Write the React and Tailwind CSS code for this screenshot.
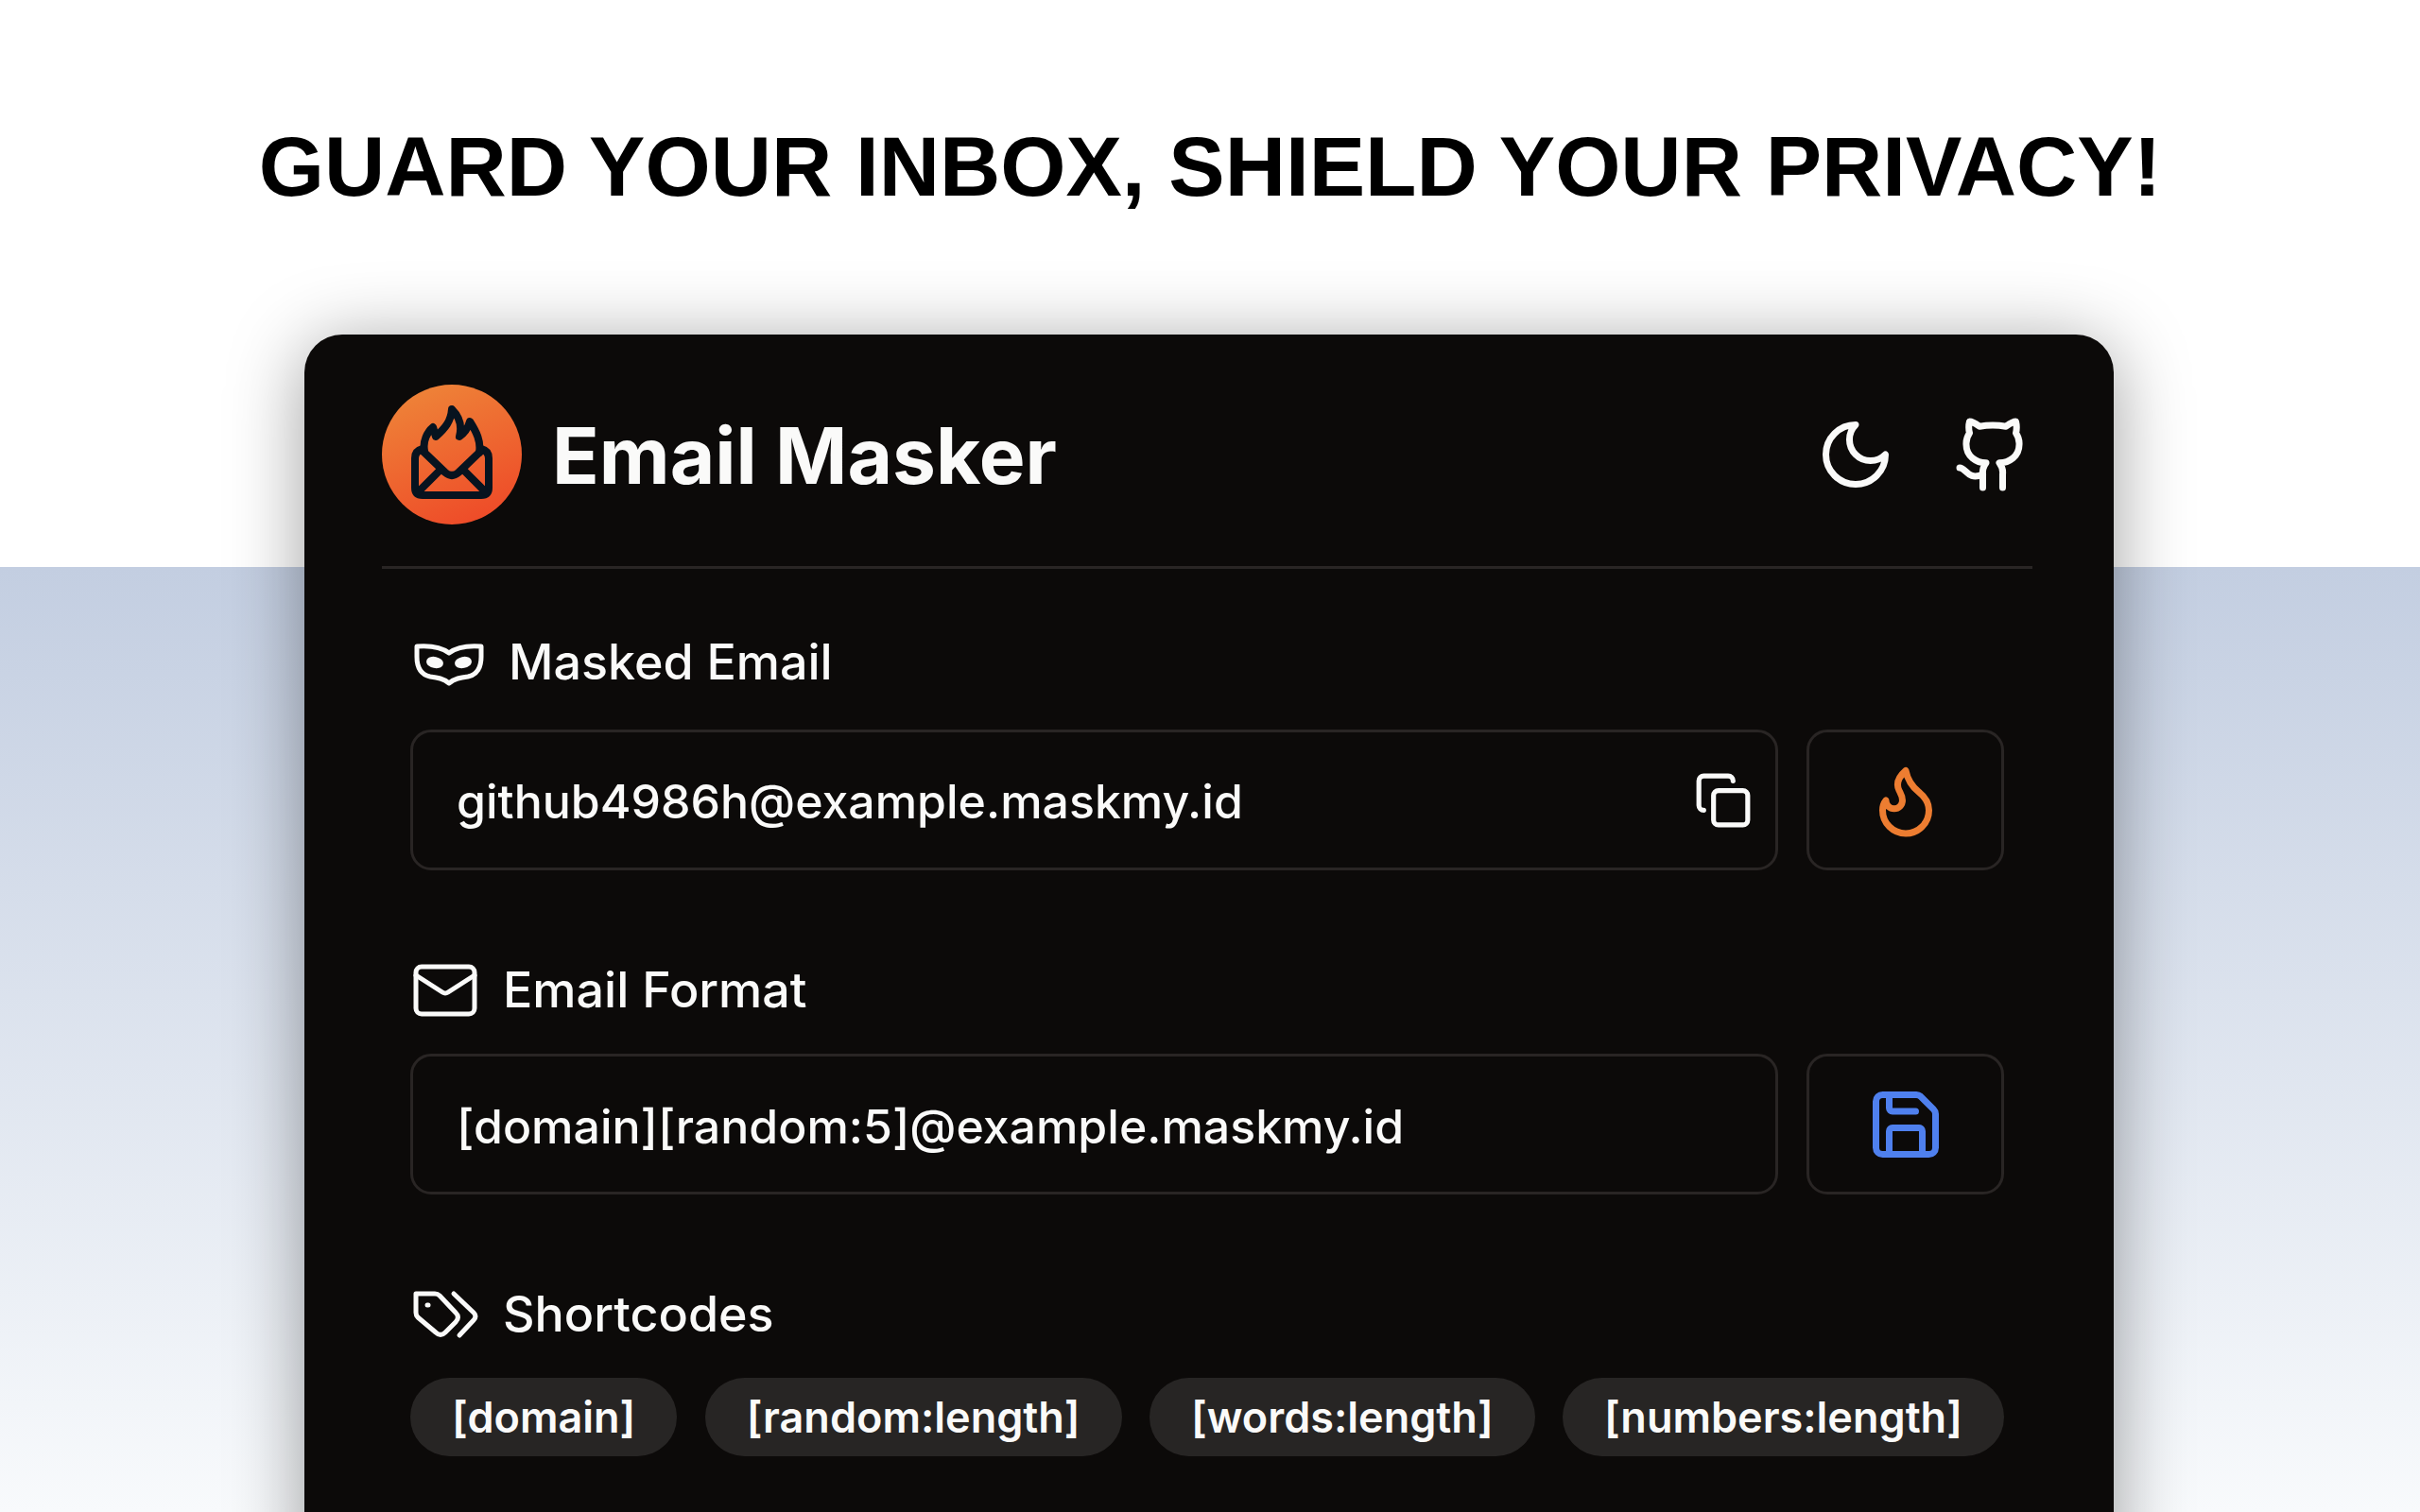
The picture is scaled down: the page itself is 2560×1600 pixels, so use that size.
import React, { useState } from 'react';
import { Copy, Save } from 'lucide-react';

const SHORTCODES = ['[domain]', '[random:length]', '[words:length]', '[numbers:length]'];

function Icon({ children, className, strokeWidth = 2, viewBox = '0 0 24 24' }) {
  return (
    <svg
      viewBox={viewBox}
      fill="none"
      stroke="currentColor"
      strokeWidth={strokeWidth}
      strokeLinecap="round"
      strokeLinejoin="round"
      className={className}
      aria-hidden="true"
    >
      {children}
    </svg>
  );
}

function Logo() {
  return (
    <svg viewBox="0 0 148 148" className="size-[148px] shrink-0" aria-hidden="true">
      <defs>
        <linearGradient id="logoFill" x1="0.3" y1="0" x2="0.7" y2="1">
          <stop offset="0" stopColor="#ee8338" />
          <stop offset="1" stopColor="#ee4a28" />
        </linearGradient>
      </defs>
      <circle cx="74" cy="74" r="74" fill="url(#logoFill)" />
      <g fill="none" stroke="#07131f" strokeWidth="8" strokeLinecap="round" strokeLinejoin="round">
        <path d="M43 68q-8 2-8 10v31q0 8 8 8h62q8 0 8-8V78q0-8-8-10" />
        <path d="M43 70l24 23q7 6 14 0l24-23" />
        <path d="M38 114l24-24M110 114L86 90" />
        <path d="M45 70C43 60 48 50 54 45l3 10C67 46 73 39 74 26c8 8 11 18 8 29 6-4 9-9 11-16 7 11 12 21 10 33" />
      </g>
    </svg>
  );
}

function SectionLabel({ icon, htmlFor, children, className }) {
  return (
    <div className={`flex items-center ${className}`}>
      {icon}
      <label htmlFor={htmlFor} className="text-[52px] leading-[58px] font-medium">
        {children}
      </label>
    </div>
  );
}

export default function App() {
  const [email, setEmail] = useState('github4986h@example.maskmy.id');
  const [format, setFormat] = useState('[domain][random:5]@example.maskmy.id');

  return (
    <div className="h-screen overflow-hidden bg-[linear-gradient(to_bottom,#ffffff_600px,#c3cee1_600px,#f8fafc_100%)] font-['Inter',sans-serif]">
      <h1 className="pt-[124px] text-center font-['Liberation_Sans',sans-serif] text-[89px] leading-[104px] font-bold whitespace-nowrap text-black">
        GUARD YOUR INBOX, SHIELD YOUR PRIVACY!
      </h1>

      <main className="mt-[126px] mr-[324px] ml-[322px] h-[1400px] rounded-[40px] bg-[#0c0a09] pr-[86px] pl-[82px] text-[#fafaf9] shadow-[0_10px_80px_rgba(0,0,0,0.38)]">
        {/* Header */}
        <header className="flex h-[248px] items-center border-b-3 border-[#292524] pt-2">
          <Logo />
          <h2 className="ml-8 pt-1 text-[82px] leading-[96px] font-bold">Email Masker</h2>
          <div className="ml-auto flex items-center gap-[61px]">
            <button type="button" aria-label="Toggle theme">
              <Icon className="size-[84px]">
                <path d="M12 3a6 6 0 0 0 9 9 9 9 0 1 1-9-9Z" />
              </Icon>
            </button>
            <a href="#github" aria-label="GitHub">
              <Icon className="size-[84px]">
                <path d="M15 22v-4a4.8 4.8 0 0 0-1-3.5c3 0 6-2 6-5.5.08-1.25-.27-2.48-1-3.5.28-1.15.28-2.35 0-3.5 0 0-1 0-3 1.5-2.64-.5-5.36-.5-8 0C6 2 5 2 5 2c-.3 1.15-.3 2.35 0 3.5A5.403 5.403 0 0 0 4 9c0 3.5 3 5.5 6 5.5-.39.49-.68 1.05-.85 1.65-.17.6-.22 1.23-.15 1.85v4" />
                <path d="M9 18c-4.51 2-5-2-7-2" />
              </Icon>
            </a>
          </div>
        </header>

        <div className="px-[30px] pt-[66px]">
          {/* Masked email */}
          <SectionLabel
            htmlFor="masked"
            className="h-[66px] gap-[24px]"
            icon={
              <Icon viewBox="0 0 80 52" strokeWidth={5} className="h-[52px] w-[80px]">
                <path d="M7 9c13-1 25 0 34 7 9-7 21-8 34-7v11c0 13-5 19-14 21-8 1-14 2-20 7-6-5-12-6-20-7C12 39 7 33 7 20Z" />
                <ellipse cx="26" cy="26" rx="6" ry="3" strokeWidth="6" transform="rotate(12 26 26)" />
                <ellipse cx="56" cy="26" rx="6" ry="3" strokeWidth="6" transform="rotate(-12 56 26)" />
              </Icon>
            }
          >
            Masked Email
          </SectionLabel>
          <div className="mt-[38px] flex gap-[30px]">
            <div className="flex h-[149px] flex-1 items-center rounded-[22px] border-3 border-[#292524] pr-6 pl-[46px]">
              <input
                id="masked"
                value={email}
                onChange={(e) => setEmail(e.target.value)}
                className="min-w-0 flex-1 bg-transparent pt-1 text-[50px] font-medium outline-none"
              />
              <button type="button" aria-label="Copy">
                <Copy size={62} />
              </button>
            </div>
            <button
              type="button"
              aria-label="Generate"
              className="flex h-[149px] w-[209px] items-center justify-center rounded-[22px] border-3 border-[#292524] text-[#ed7d31]"
            >
              <Icon className="size-[84px]">
                <path d="M8.5 14.5A2.5 2.5 0 0 0 11 12c0-1.38-.5-2-1-3-1.072-2.143-.224-4.054 2-6 .5 2.5 2 4.9 4 6.5 2 1.6 3 3.5 3 5.5a7 7 0 1 1-14 0c0-1.153.433-2.294 1-3a2.5 2.5 0 0 0 2.5 2.5z" />
              </Icon>
            </button>
          </div>

          {/* Email format */}
          <SectionLabel
            htmlFor="format"
            className="mt-[98px] h-[58px] gap-[24px]"
            icon={
              <Icon viewBox="0 0 74 60" strokeWidth={5} className="h-[60px] w-[74px]">
                <rect x="6" y="5" width="62" height="50" rx="6" />
                <path d="M6 14l28 18q3 2 6 0l28-18" />
              </Icon>
            }
          >
            Email Format
          </SectionLabel>
          <div className="mt-[38px] flex gap-[30px]">
            <input
              id="format"
              value={format}
              onChange={(e) => setFormat(e.target.value)}
              className="h-[149px] min-w-0 flex-1 rounded-[22px] border-3 border-[#292524] bg-transparent px-[46px] pt-1 text-[50px] font-medium outline-none"
            />
            <button
              type="button"
              aria-label="Save format"
              className="flex h-[149px] w-[209px] items-center justify-center rounded-[22px] border-3 border-[#292524] text-[#4f80ee]"
            >
              <Save size={84} />
            </button>
          </div>

          {/* Shortcodes */}
          <div className="mt-[98px] flex h-[58px] items-center gap-[24px]">
            <Icon viewBox="0 0 74 60" strokeWidth={5} className="h-[60px] w-[74px]">
              <path d="M6 8h20q3 0 5 2l17 18q5 5 0 10L37 49q-5 5-10 0L8 33q-2-2-2-5Z" />
              <path d="M46 8l21 20q4 4 0 8L52 52" />
              <path d="M18 20h1" />
            </Icon>
            <h3 className="text-[52px] leading-[58px] font-medium">Shortcodes</h3>
          </div>
          <div className="mt-[38px] flex justify-between">
            {SHORTCODES.map((code) => (
              <button
                key={code}
                type="button"
                className="h-[83px] rounded-full bg-[#272524] px-[44px] text-[45px] font-semibold"
              >
                {code}
              </button>
            ))}
          </div>
        </div>
      </main>
    </div>
  );
}
